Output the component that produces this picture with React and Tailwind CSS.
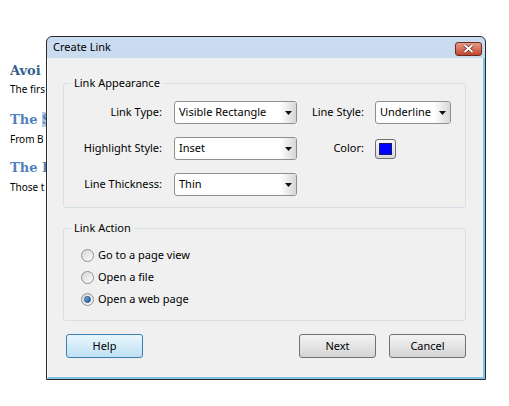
import React from "react";

const font = { fontFamily: '"Noto Sans", "DejaVu Sans", sans-serif' };
const serif = { fontFamily: '"DejaVu Serif", serif' };

const Select = ({ value, width }) => (
  <div
    className={`h-[23px] ${width} flex items-stretch rounded-[3px] border border-[#8f8f8f] bg-white`}
  >
    <div className="flex-1 flex items-center pl-[4px] text-[11px] text-black whitespace-nowrap overflow-hidden">
      {value}
    </div>
    <div className="w-[16px] flex items-center justify-center rounded-r-[2px] bg-gradient-to-r from-[#ffffff] to-[#d6d6d6]">
      <svg width="7" height="4" viewBox="0 0 7 4">
        <path d="M0 0 L7 0 L3.5 4 Z" fill="#111" />
      </svg>
    </div>
  </div>
);

const Radio = ({ label, checked }) => (
  <div className="h-[22px] flex items-center gap-[4px]">
    <div className="w-[13px] h-[13px] rounded-full border border-[#8e8f8f] bg-gradient-to-br from-[#d4d4d4] to-[#ffffff] flex items-center justify-center">
      {checked && (
        <div className="w-[7px] h-[7px] rounded-full border border-[#1c4f80] bg-gradient-to-br from-[#7fb6e6] to-[#1a5a9a]" />
      )}
    </div>
    <span className="text-[11px] text-black">{label}</span>
  </div>
);

const Button = ({ label, primary }) => (
  <div
    className={
      primary
        ? "w-[77px] h-[24px] flex items-center justify-center rounded-[3px] border border-[#3c7fb1] bg-gradient-to-b from-[#e9f6fd] to-[#bfe1f4] text-[11px] text-black"
        : "w-[77px] h-[24px] flex items-center justify-center rounded-[3px] border border-[#707070] bg-gradient-to-b from-[#f4f4f4] to-[#d4d4d4] text-[11px] text-black"
    }
  >
    {label}
  </div>
);

export default function App() {
  return (
    <div className="relative w-[509px] h-[406px] bg-white overflow-hidden">
      {/* document behind the dialog, only the left edge shows */}
      <div className="w-[46px] overflow-hidden pl-[10px]">
        <h1 className="mt-[62px] text-[13px] leading-[18px] font-bold text-[#365f91] whitespace-nowrap" style={serif}>
          Avoi
        </h1>
        <p className="text-[10px] leading-[18px] text-black whitespace-nowrap" style={font}>
          The firs
        </p>
        <h2 className="mt-[13px] text-[13px] leading-[18px] font-bold text-[#4f81bd] whitespace-nowrap" style={serif}>
          The <span className="bg-[#b4cbe3]">S</span>
        </h2>
        <p className="mt-[1px] text-[10px] leading-[18px] text-black whitespace-nowrap" style={font}>
          From B
        </p>
        <h2 className="mt-[11px] text-[13px] leading-[18px] font-bold text-[#4f81bd] whitespace-nowrap" style={serif}>
          The E
        </h2>
        <p className="mt-[1px] text-[10px] leading-[18px] text-black whitespace-nowrap" style={font}>
          Those t
        </p>
      </div>

      <div
        className="absolute left-[46px] top-[36px] w-[440px] h-[344px] flex flex-col rounded-t-[6px] border border-[#2a2a2a] bg-gradient-to-b from-[#cadcf0] to-[#b3cce8]"
        style={font}
      >
        <div className="h-[21px] flex items-center justify-between pl-[6px] pr-[3px]">
          <span className="text-[11px] text-black">Create Link</span>
          <div className="w-[27px] h-[14px] mt-[2px] flex items-center justify-center rounded-[3px] border border-[#6e2b22] bg-gradient-to-b from-[#e59a88] to-[#c2432c]">
            <svg width="11" height="9" viewBox="0 0 11 9">
              <path d="M1.5 1 L9.5 8 M9.5 1 L1.5 8" stroke="#5a2018" strokeWidth="3.2" />
              <path d="M1.5 1 L9.5 8 M9.5 1 L1.5 8" stroke="#fff" strokeWidth="2" />
            </svg>
          </div>
        </div>

        <div className="flex-1 flex flex-col bg-[#f0f0f0] border-l border-l-[#fafafa] border-r-2 border-r-[#7ec3ea] border-b-2 border-b-[#7ec3ea] pl-[15px] pr-[17px]">
          <fieldset className="mt-[18px] rounded-[3px] border border-[#d5dfe5] pb-[11px]">
            <legend className="ml-[7px] px-[3px] text-[11px] leading-[14px] text-black">
              Link Appearance
            </legend>
            <div className="mt-[11px] flex flex-col gap-[13px]">
              <div className="flex items-center">
                <span className="w-[98px] text-right text-[11px] text-black">Link Type:</span>
                <div className="ml-[12px]">
                  <Select value="Visible Rectangle" width="w-[123px]" />
                </div>
                <span className="w-[67px] text-right text-[11px] text-black">Line Style:</span>
                <div className="ml-[11px]">
                  <Select value="Underline" width="w-[76px]" />
                </div>
              </div>
              <div className="flex items-center">
                <span className="w-[98px] text-right text-[11px] text-black">Highlight Style:</span>
                <div className="ml-[12px]">
                  <Select value="Inset" width="w-[123px]" />
                </div>
                <span className="w-[67px] text-right text-[11px] text-black">Color:</span>
                <div className="ml-[11px] w-[21px] h-[20px] rounded-[3px] border border-[#707070] bg-gradient-to-b from-[#f6f6f6] to-[#d9d9d9] p-[3px]">
                  <div className="w-full h-full border border-[#1b1b6e] bg-[#0000ff]" />
                </div>
              </div>
              <div className="flex items-center">
                <span className="w-[98px] text-right text-[11px] text-black">Line Thickness:</span>
                <div className="ml-[12px]">
                  <Select value="Thin" width="w-[123px]" />
                </div>
              </div>
            </div>
          </fieldset>

          <fieldset className="mt-[13px] rounded-[3px] border border-[#d5dfe5] pb-[10px]">
            <legend className="ml-[7px] px-[3px] text-[11px] leading-[14px] text-black">
              Link Action
            </legend>
            <div className="mt-[9px] pl-[17px] flex flex-col">
              <Radio label="Go to a page view" />
              <Radio label="Open a file" />
              <Radio label="Open a web page" checked />
            </div>
          </fieldset>

          <div className="mt-[13px] flex items-center pl-[3px]">
            <Button label="Help" primary />
            <div className="flex-1" />
            <Button label="Next" />
            <div className="ml-[13px]">
              <Button label="Cancel" />
            </div>
          </div>
        </div>
      </div>
    </div>
  );
}
